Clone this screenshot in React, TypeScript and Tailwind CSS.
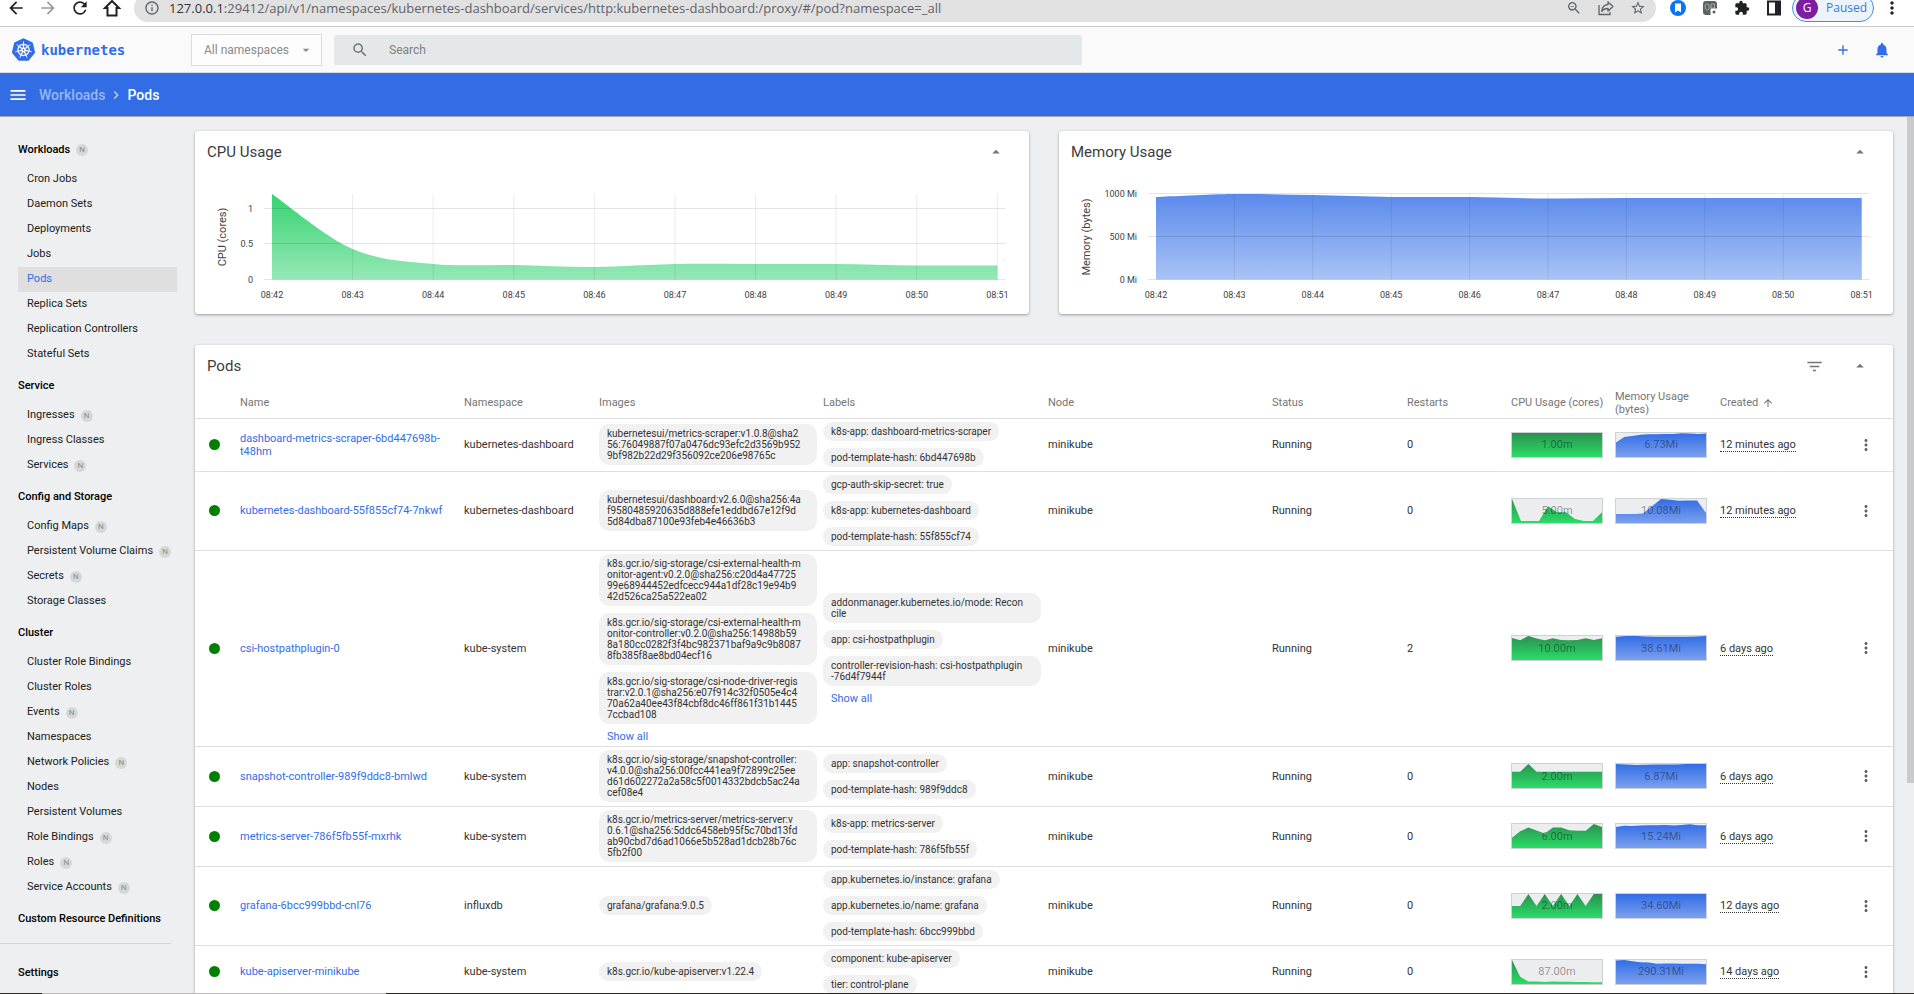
import React from 'react';
import {
    MdAdd, MdArrowBack, MdArrowDropDown, MdArrowDropUp, MdArrowForward, MdArrowUpward, MdChevronRight, MdExtension,
    MdFilterList, MdInfoOutline, MdMenu, MdMoreVert, MdNotifications, MdRefresh, MdSearch, MdStarBorder, MdZoomOut,
} from 'react-icons/md';
import { SiKubernetes } from 'react-icons/si';

interface NavItem {
    label: string;
    namespaced?: boolean;
    active?: boolean;
}

interface NavGroup {
    title: string;
    namespaced?: boolean;
    items: NavItem[];
}

interface Pod {
    name: string;
    namespace: string;
    images: string[];
    moreImages?: boolean;
    labels: string[];
    moreLabels?: boolean;
    restarts: number;
    cpu: string;
    cpuData: number[];
    memory: string;
    memoryData: number[];
    created: string;
}

const NAV: NavGroup[] = [
    {
        title: 'Workloads',
        namespaced: true,
        items: [
            { label: 'Cron Jobs' },
            { label: 'Daemon Sets' },
            { label: 'Deployments' },
            { label: 'Jobs' },
            { label: 'Pods', active: true },
            { label: 'Replica Sets' },
            { label: 'Replication Controllers' },
            { label: 'Stateful Sets' },
        ],
    },
    {
        title: 'Service',
        items: [
            { label: 'Ingresses', namespaced: true },
            { label: 'Ingress Classes' },
            { label: 'Services', namespaced: true },
        ],
    },
    {
        title: 'Config and Storage',
        items: [
            { label: 'Config Maps', namespaced: true },
            { label: 'Persistent Volume Claims', namespaced: true },
            { label: 'Secrets', namespaced: true },
            { label: 'Storage Classes' },
        ],
    },
    {
        title: 'Cluster',
        items: [
            { label: 'Cluster Role Bindings' },
            { label: 'Cluster Roles' },
            { label: 'Events', namespaced: true },
            { label: 'Namespaces' },
            { label: 'Network Policies', namespaced: true },
            { label: 'Nodes' },
            { label: 'Persistent Volumes' },
            { label: 'Role Bindings', namespaced: true },
            { label: 'Roles', namespaced: true },
            { label: 'Service Accounts', namespaced: true },
        ],
    },
];

const PODS: Pod[] = [
    {
        name: 'dashboard-metrics-scraper-6bd447698b-t48hm',
        namespace: 'kubernetes-dashboard',
        images: ['kubernetesui/metrics-scraper:v1.0.8@sha2\n56:76049887f07a0476dc93efc2d3569b952\n9bf982b22d29f356092ce206e98765c'],
        labels: ['k8s-app: dashboard-metrics-scraper', 'pod-template-hash: 6bd447698b'],
        restarts: 0,
        cpu: '1.00m',
        cpuData: [1, 1],
        memory: '6.73Mi',
        memoryData: [0.6, 0.83, 0.87, 0.93, 0.95, 0.95, 0.96, 0.96, 0.99, 0.98, 0.96, 0.98],
        created: '12 minutes ago',
    },
    {
        name: 'kubernetes-dashboard-55f855cf74-7nkwf',
        namespace: 'kubernetes-dashboard',
        images: ['kubernetesui/dashboard:v2.6.0@sha256:4a\nf9580485920635d888efe1eddbd67e12f9d\n5d84dba87100e93feb4e46636b3'],
        labels: ['gcp-auth-skip-secret: true', 'k8s-app: kubernetes-dashboard', 'pod-template-hash: 55f855cf74'],
        restarts: 0,
        cpu: '5.00m',
        cpuData: [1, 0.08, 0.08, 0.08, 0.7, 0.45, 0.45, 0.17, 0.08, 0.08, 0.45],
        memory: '10.08Mi',
        memoryData: [0.38, 0.38, 0.38, 0.4, 0.7, 1, 0.97, 0.93, 0.94, 0.94, 0.42],
        created: '12 minutes ago',
    },
    {
        name: 'csi-hostpathplugin-0',
        namespace: 'kube-system',
        images: [
            'k8s.gcr.io/sig-storage/csi-external-health-m\nonitor-agent:v0.2.0@sha256:c20d4a47725\n99e68944452edfcecc944a1df28c19e94b9\n42d526ca25a522ea02',
            'k8s.gcr.io/sig-storage/csi-external-health-m\nonitor-controller:v0.2.0@sha256:14988b59\n8a180cc0282f3f4bc982371baf9a9c9b8087\n8fb385f8ae8bd04ecf16',
            'k8s.gcr.io/sig-storage/csi-node-driver-regis\ntrar:v2.0.1@sha256:e07f914c32f0505e4c4\n70a62a40ee43f84cbf8dc46ff861f31b1445\n7ccbad108',
        ],
        moreImages: true,
        labels: [
            'addonmanager.kubernetes.io/mode: Recon\ncile',
            'app: csi-hostpathplugin',
            'controller-revision-hash: csi-hostpathplugin\n-76d4f7944f',
        ],
        moreLabels: true,
        restarts: 2,
        cpu: '10.00m',
        cpuData: [0.92, 0.82, 1, 0.9, 0.82, 0.91, 0.83, 0.82, 0.83, 0.91, 0.83, 0.91],
        memory: '38.61Mi',
        memoryData: [0.97, 1, 1, 0.98, 0.97, 0.97, 0.97, 0.97, 0.98, 1],
        created: '6 days ago',
    },
    {
        name: 'snapshot-controller-989f9ddc8-bmlwd',
        namespace: 'kube-system',
        images: ['k8s.gcr.io/sig-storage/snapshot-controller:\nv4.0.0@sha256:00fcc441ea9f72899c25ee\nd61d602272a2a58c5f0014332bdcb5ac24a\ncef08e4'],
        labels: ['app: snapshot-controller', 'pod-template-hash: 989f9ddc8'],
        restarts: 0,
        cpu: '2.00m',
        cpuData: [0.68, 0.68, 1, 0.68, 0.68, 0.68, 0.68, 0.68, 0.68, 0.68, 0.68, 0.68],
        memory: '6.87Mi',
        memoryData: [1, 0.98, 0.96, 0.97, 0.98, 0.98, 0.98, 1, 1, 1],
        created: '6 days ago',
    },
    {
        name: 'metrics-server-786f5fb55f-mxrhk',
        namespace: 'kube-system',
        images: ['k8s.gcr.io/metrics-server/metrics-server:v\n0.6.1@sha256:5ddc6458eb95f5c70bd13fd\nab90cbd7d6ad1066e5b528ad1dcb28b76c\n5fb2f00'],
        labels: ['k8s-app: metrics-server', 'pod-template-hash: 786f5fb55f'],
        restarts: 0,
        cpu: '6.00m',
        cpuData: [0.43, 0.7, 0.85, 0.73, 0.6, 0.85, 0.85, 0.74, 0.72, 0.72, 1, 0.88],
        memory: '15.24Mi',
        memoryData: [0.88, 0.93, 0.92, 0.94, 0.95, 0.95, 0.96, 0.94, 0.96, 0.99, 0.95, 0.95],
        created: '6 days ago',
    },
    {
        name: 'grafana-6bcc999bbd-cnl76',
        namespace: 'influxdb',
        images: ['grafana/grafana:9.0.5'],
        labels: ['app.kubernetes.io/instance: grafana', 'app.kubernetes.io/name: grafana', 'pod-template-hash: 6bcc999bbd'],
        restarts: 0,
        cpu: '2.00m',
        cpuData: [0.5, 0.5, 1, 0.5, 1, 0.5, 1, 0.5, 1, 0.5, 1, 1],
        memory: '34.60Mi',
        memoryData: [1, 1],
        created: '12 days ago',
    },
    {
        name: 'kube-apiserver-minikube',
        namespace: 'kube-system',
        images: ['k8s.gcr.io/kube-apiserver:v1.22.4'],
        labels: ['component: kube-apiserver', 'tier: control-plane'],
        restarts: 0,
        cpu: '87.00m',
        cpuData: [1, 0.3, 0.1, 0.1, 0.08, 0.1, 0.09, 0.09, 0.08, 0.08, 0.07, 0.07],
        memory: '290.31Mi',
        memoryData: [0.98, 1, 0.95, 0.91, 0.9, 0.84, 0.85, 0.85, 0.84, 0.84, 0.84, 0.82],
        created: '14 days ago',
    },
];

const TIMES = ['08:42', '08:43', '08:44', '08:45', '08:46', '08:47', '08:48', '08:49', '08:50', '08:51'];

const COLUMNS = [
    { title: '', width: 'w-[45px]' },
    { title: 'Name', width: 'w-[224px]' },
    { title: 'Namespace', width: 'w-[135px]' },
    { title: 'Images', width: 'w-[224px]' },
    { title: 'Labels', width: 'w-[225px]' },
    { title: 'Node', width: 'w-[224px]' },
    { title: 'Status', width: 'w-[135px]' },
    { title: 'Restarts', width: 'w-[104px]' },
    { title: 'CPU Usage (cores)', width: 'w-[104px]' },
    { title: 'Memory Usage (bytes)', width: 'w-[105px]' },
    { title: 'Created', width: 'w-[132px]' },
    { title: '', width: 'w-[41px]' },
];

// Catmull-Rom spline through the points, as an SVG path
const smoothPath = (pts: [number, number][]) => {
    let d = `M${pts[0][0]},${pts[0][1]}`;
    for (let i = 0; i < pts.length - 1; i++) {
        const p0 = pts[i - 1] ?? pts[i];
        const p1 = pts[i];
        const p2 = pts[i + 1];
        const p3 = pts[i + 2] ?? p2;
        d += ` C${p1[0] + (p2[0] - p0[0]) / 6},${p1[1] + (p2[1] - p0[1]) / 6} ${p2[0] - (p3[0] - p1[0]) / 6},${p2[1] - (p3[1] - p1[1]) / 6} ${p2[0]},${p2[1]}`;
    }
    return d;
};

const BrowserBar: React.FC = () => (
    <div className="flex h-[27px] shrink-0 items-end overflow-hidden border-b border-[#c9cacb] bg-white pb-1 font-['Open_Sans',sans-serif] text-[#202124]">
        <div className="flex h-7 w-[134px] shrink-0 items-center gap-3 pl-[6px]">
            <button aria-label="Back"><MdArrowBack className="size-5" /></button>
            <button aria-label="Forward" className="text-[#9a9b9d]"><MdArrowForward className="size-5" /></button>
            <button aria-label="Reload"><MdRefresh className="size-5" /></button>
            <button aria-label="Home">
                <svg viewBox="0 0 20 20" className="size-5" fill="none" stroke="currentColor" strokeWidth="2">
                    <path d="M10 3 L3 10 H5.5 V17.5 H14.5 V10 H17 Z" />
                </svg>
            </button>
        </div>
        <div className="flex h-7 flex-1 items-center rounded-full bg-[#e1e1e1] px-[10px] text-[#5f6368]">
            <MdInfoOutline className="size-4 shrink-0" />
            <div className="flex-1 pl-[9px] text-[13px] leading-[14px] whitespace-nowrap">
                <span className="text-[#303134]">127.0.0.1</span>:29412/api/v1/namespaces/kubernetes-dashboard/services/http:kubernetes-dashboard:/proxy/#/pod?namespace=_all
            </div>
            <div className="flex items-center gap-4">
                <button aria-label="Zoom"><MdZoomOut className="size-4" /></button>
                <button aria-label="Share">
                    <svg viewBox="0 0 16 16" className="size-4" fill="none" stroke="currentColor" strokeWidth="1.3">
                        <path d="M1 5 V14.5 H12 V12" />
                        <path d="M10 2 L15 6.5 L10 11 V8.5 C7 8.5 5 9.5 3.8 11.5 C4 7.5 6.5 4.8 10 4.5 Z" strokeLinejoin="round" />
                    </svg>
                </button>
                <button aria-label="Bookmark"><MdStarBorder className="size-4" /></button>
            </div>
        </div>
        <div className="flex h-7 shrink-0 items-center gap-4 pl-[14px]">
            <svg viewBox="0 0 16 16" className="size-4">
                <circle cx="8" cy="8" r="8" fill="#0b74f5" />
                <path d="M5 3.5 H11 V12.5 L8 10.5 L5 12.5 Z" fill="#fff" />
            </svg>
            <svg viewBox="0 0 16 16" className="size-4">
                <rect x="1" y="1" width="14" height="14" rx="3" fill="#5f6061" />
                <path d="M3 5 Q5 2.5 7 5 V9 Q5 11.5 3.5 9 Z M9 4 H12.5 V8 H9 Z" fill="none" stroke="#a9aaab" />
                <rect x="8.5" y="8.5" width="7" height="7" rx="1" fill="#fff" />
                <circle cx="12" cy="12" r="1.5" fill="#5f6061" />
            </svg>
            <MdExtension className="size-4" />
            <svg viewBox="0 0 16 16" className="size-4">
                <rect x="2" y="1.5" width="12" height="13" fill="none" stroke="currentColor" strokeWidth="2" />
                <rect x="9" y="1.5" width="5" height="13" fill="currentColor" />
            </svg>
        </div>
        <button className="ml-[10px] flex h-7 w-[82px] shrink-0 items-center gap-2 rounded-full border border-[#4a8ae0] bg-[#edf3fb] pl-[3px] text-xs text-[#3b78d8]">
            <span className="flex size-[22px] items-center justify-center rounded-full bg-[#7b1fa2] text-xs text-white">G</span>
            Paused
        </button>
        <button aria-label="Browser menu" className="flex h-7 w-10 shrink-0 items-center justify-center pr-1"><MdMoreVert className="size-5" /></button>
    </div>
);

const TopBar: React.FC = () => (
    <header className="flex h-[46px] shrink-0 items-center border-b border-[#dcdcdc] bg-[#fafafa] text-xs">
        <a href="#home" className="flex w-[191px] items-center gap-[6px] pl-3 text-[#326de6]">
            <SiKubernetes className="size-[23px]" />
            <span className="font-['DejaVu_Sans_Mono',monospace] text-sm font-bold">kubernetes</span>
        </a>
        <div className="relative">
            <select aria-label="Namespace" className="h-8 w-[131px] appearance-none border border-[#dcdcdc] bg-[#fdfdfd] pl-3 text-[#8a8a8a]">
                <option>All namespaces</option>
            </select>
            <MdArrowDropDown className="pointer-events-none absolute top-2 right-2 size-4 text-[#8a8a8a]" />
        </div>
        <label className="ml-3 flex h-[30px] w-[748px] items-center rounded-xs bg-[#e5e8e8] pl-[17px]">
            <MdSearch className="size-[18px] text-[#757575]" />
            <input aria-label="Search" placeholder="Search" className="ml-[20px] flex-1 bg-transparent outline-none placeholder:text-[#7d8080]" />
        </label>
        <div className="ml-auto flex items-center gap-[22px] pr-[23px] text-[#326de6]">
            <button aria-label="Create"><MdAdd className="size-4" /></button>
            <button aria-label="Notifications"><MdNotifications className="size-[18px]" /></button>
        </div>
    </header>
);

const Breadcrumbs: React.FC = () => (
    <div className="flex h-11 shrink-0 items-center border-b border-[#a3a7af] bg-[#326de6] pl-2 text-sm font-medium text-white">
        <button aria-label="Toggle menu"><MdMenu className="size-5" /></button>
        <a href="#workloads" className="ml-[11px] text-[#98b6f2]">Workloads</a>
        <MdChevronRight className="mx-[3px] size-4 text-[#c3d4f8]" />
        <span>Pods</span>
    </div>
);

const NamespacedBadge: React.FC = () => (
    <span className="flex size-3 items-center justify-center rounded-full bg-[#d6d7d8] text-[8px] font-normal text-[#8d8e8f]">N</span>
);

const Sidebar: React.FC = () => (
    <nav className="w-[195px] shrink-0 pt-[17px] text-[11px] text-[#212121]">
        {NAV.map(group => (
            <div key={group.title} className="pb-[3px] pl-[18px]">
                <a href="#group" className="mb-px flex h-8 items-center gap-[6px] font-medium text-black">
                    {group.title}
                    {group.namespaced && <NamespacedBadge />}
                </a>
                {group.items.map(item => (
                    <a
                        key={item.label}
                        href="#item"
                        className={`mr-[18px] flex h-[25px] items-center gap-[6px] pl-[9px] ${item.active ? 'bg-[#dfdfdf] text-[#326de6]' : ''}`}
                    >
                        {item.label}
                        {item.namespaced && <NamespacedBadge />}
                    </a>
                ))}
            </div>
        ))}
        <a href="#crd" className="flex h-8 items-center pl-[18px] font-medium text-black">Custom Resource Definitions</a>
        <hr className="mt-2 mr-6 mb-[13px] border-[#d3d5d6]" />
        <a href="#settings" className="flex h-8 items-center pl-[18px] font-medium text-black">Settings</a>
    </nav>
);

const CardHeader: React.FC<{ title: string; filter?: boolean }> = ({ title, filter }) => (
    <div className="flex h-[42px] items-center pr-6 pl-3 text-[#757575]">
        <h2 className="flex-1 text-[15px] text-[#3c3c3c]">{title}</h2>
        {filter && <button aria-label="Filter"><MdFilterList className="mr-[27px] size-[19px]" /></button>}
        <button aria-label="Collapse"><MdArrowDropUp className="size-[18px]" /></button>
    </div>
);

interface UsageChartProps {
    id: string;
    title: string;
    axis: string;
    left: number;
    step: number;
    ticks: { label: string; y: number }[];
    values: number[];
    colors: [string, string];
}

const UsageChart: React.FC<UsageChartProps> = ({ id, title, axis, left, step, ticks, values, colors }) => {
    const right = left + step * 9;
    const line = smoothPath(values.map((y, i): [number, number] => [left + step * i, y]));

    return (
        <section className="min-w-0 flex-1 rounded-[3px] bg-white shadow-[0_1px_3px_rgba(0,0,0,0.35)]">
            <CardHeader title={title} />
            <svg viewBox="0 0 834 141" className="block h-auto w-full" fontSize="9" fill="#424242">
                <defs>
                    <linearGradient id={id} x1="0" y1="0" x2="0" y2="1">
                        <stop offset="0" stopColor={colors[0]} />
                        <stop offset="1" stopColor={colors[1]} />
                    </linearGradient>
                </defs>
                <path d={`${line} V106.5 H${left} Z`} fill={`url(#${id})`} />
                {ticks.map(tick => (
                    <g key={tick.label}>
                        <line x1={left - 8} x2={right + 8} y1={tick.y} y2={tick.y} stroke="#000" strokeOpacity="0.1" />
                        <text x={left - 19} y={tick.y + 3} textAnchor="end">{tick.label}</text>
                    </g>
                ))}
                {TIMES.map((time, i) => (
                    <g key={time}>
                        <line x1={left + step * i} x2={left + step * i} y1="21" y2="107" stroke="#000" strokeOpacity={i ? 0.08 : 0} />
                        <text x={left + step * i} y="125" textAnchor="middle">{time}</text>
                    </g>
                ))}
                <text transform="translate(31 64) rotate(-90)" textAnchor="middle" fontSize="11">{axis}</text>
            </svg>
        </section>
    );
};

const Sparkline: React.FC<{ value: string; data: number[]; fill: string }> = ({ value, data, fill }) => {
    const points = data.map((v, i) => `${(i * 90) / (data.length - 1)},${24 - v * 24}`).join(' ');

    return (
        <div className="relative h-[26px] w-[92px] border border-[#cfd2d5] bg-[#ecedef]">
            <svg viewBox="0 0 90 24" preserveAspectRatio="none" className="block size-full">
                <polygon points={`0,24 ${points} 90,24`} fill={fill} />
            </svg>
            <span className="absolute inset-0 flex items-center justify-center text-black/40">{value}</span>
        </div>
    );
};

// a value that wraps fills the whole column
const Chips: React.FC<{ items: string[]; more?: boolean }> = ({ items, more }) => (
    <div className="flex flex-col items-start gap-[7px] text-[10px] leading-[11px] text-[#333]">
        {items.map(item => (
            <span
                key={item}
                className={`rounded-[10px] bg-[#f1f1f1] px-2 py-1 whitespace-pre ${item.includes('\n') ? 'w-[218px]' : ''}`}
            >
                {item}
            </span>
        ))}
        {more && <button className="pl-2 text-[11px] text-[#326de6]">Show all</button>}
    </div>
);

const PodsTable: React.FC = () => (
    <section className="rounded-[3px] bg-white shadow-[0_1px_3px_rgba(0,0,0,0.35)]">
        <CardHeader title="Pods" filter />
        <table className="w-full table-fixed border-separate border-spacing-0 text-[11px] leading-[13px] text-[#333]">
            <thead>
                <tr>
                    {COLUMNS.map((col, i) => (
                        <th key={i} className={`h-8 border-b border-[#e0e0e0] p-0 text-left font-normal text-[#757575] ${col.width}`}>
                            {col.title === 'Created' ? (
                                <span className="flex items-center gap-1">Created <MdArrowUpward className="size-3" /></span>
                            ) : col.title}
                        </th>
                    ))}
                </tr>
            </thead>
            <tbody className="[&_td]:border-b [&_td]:border-[#e0e0e0] [&_td]:p-0 [&_td]:pt-[3px] [&_td]:pb-1">
                {PODS.map(pod => (
                    <tr key={pod.name}>
                        <td><span className="ml-[14px] block size-[11px] rounded-full bg-[#008000]" /></td>
                        <td><a href="#pod" className="block pr-3 text-[#326de6]">{pod.name}</a></td>
                        <td>{pod.namespace}</td>
                        <td><Chips items={pod.images} more={pod.moreImages} /></td>
                        <td><Chips items={pod.labels} more={pod.moreLabels} /></td>
                        <td>minikube</td>
                        <td>Running</td>
                        <td>{pod.restarts}</td>
                        <td><Sparkline value={pod.cpu} data={pod.cpuData} fill="url(#spark-cpu)" /></td>
                        <td><Sparkline value={pod.memory} data={pod.memoryData} fill="url(#spark-memory)" /></td>
                        <td><span className="border-b border-dotted border-[#333]">{pod.created}</span></td>
                        <td><button aria-label={`Actions for ${pod.name}`} className="block"><MdMoreVert className="ml-[5px] size-[18px] text-[#616161]" /></button></td>
                    </tr>
                ))}
            </tbody>
        </table>
    </section>
);

const App: React.FC = () => (
    <div className="flex h-screen flex-col overflow-hidden bg-[#edeff0] font-[Roboto,sans-serif]">
        {/* gradients shared by every sparkline */}
        <svg className="absolute size-0" aria-hidden="true">
            <defs>
                <linearGradient id="spark-cpu" x1="0" y1="0" x2="0" y2="24" gradientUnits="userSpaceOnUse">
                    <stop offset="0" stopColor="#2a9150" />
                    <stop offset="1" stopColor="#2bdc68" />
                </linearGradient>
                <linearGradient id="spark-memory" x1="0" y1="0" x2="0" y2="24" gradientUnits="userSpaceOnUse">
                    <stop offset="0" stopColor="#326de6" />
                    <stop offset="1" stopColor="#7ba0ee" />
                </linearGradient>
            </defs>
        </svg>
        <BrowserBar />
        <TopBar />
        <Breadcrumbs />
        <div className="flex min-h-0 flex-1 overflow-hidden">
            <Sidebar />
            <main className="min-w-0 flex-1 pt-[14px] pr-[14px]">
                <div className="mb-[31px] flex gap-[30px]">
                    <UsageChart
                        id="cpu-area"
                        title="CPU Usage"
                        axis="CPU (cores)"
                        left={77}
                        step={80.6}
                        ticks={[{ label: '1', y: 35.5 }, { label: '0.5', y: 70.5 }, { label: '0', y: 106.5 }]}
                        values={[21, 76, 91, 92, 94, 91, 91, 91, 92.5, 92.5]}
                        colors={['#36d372', '#96e8b6']}
                    />
                    <UsageChart
                        id="memory-area"
                        title="Memory Usage"
                        axis="Memory (bytes)"
                        left={97}
                        step={78.4}
                        ticks={[{ label: '1000 Mi', y: 20.5 }, { label: '500 Mi', y: 63.5 }, { label: '0 Mi', y: 106.5 }]}
                        values={[24, 21, 22, 24, 24, 25.5, 25, 25, 25, 25]}
                        colors={['#5b8aec', '#a9c3f5']}
                    />
                </div>
                <PodsTable />
            </main>
            <div className="w-[7px] shrink-0">
                <div className="h-[76%] bg-[#c9cacb]" />
            </div>
        </div>
        <div className="flex h-px shrink-0 bg-[#2b2727]">
            <div className="ml-[42px] w-[344px] bg-[#bdbbbb]" />
        </div>
    </div>
);

export default App;
